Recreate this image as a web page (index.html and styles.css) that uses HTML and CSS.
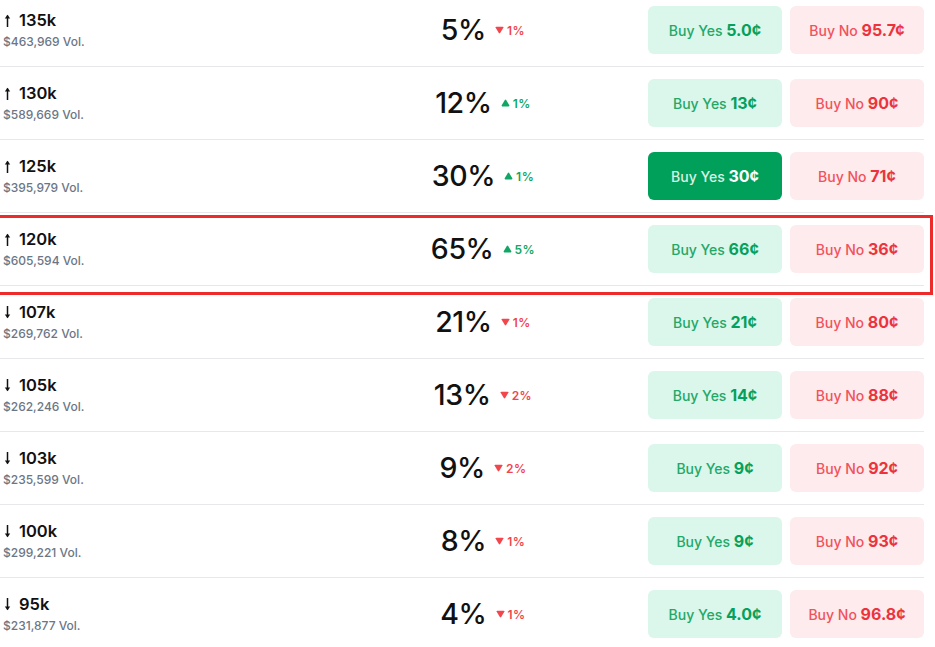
FILE: index.html
```html
<!DOCTYPE html>
<html>
<head>
<meta charset="utf-8">
<link rel="stylesheet" href="styles.css">
</head>
<body>
<div class="list">
  <div class="row">
    <div class="label"><div class="strike"><svg class="arr" viewBox="0 0 7 13"><path d="M3.5 1.5V13" /><path class="head" d="M0.8 4.6L3.5 0.8L6.2 4.6Z"/></svg>135k</div><div class="vol">$463,969 Vol.</div></div>
    <div class="prob"><span class="pct">5%</span><span class="chg down"><svg class="tri" viewBox="0 0 8 7"><path d="M0.5 1.2Q0.5 0.5 1.2 0.5H6.8Q7.5 0.5 7.5 1.2L4.6 6.2Q4 7 3.4 6.2Z"/></svg>1%</span></div>
    <div class="btns"><button class="btn yes">Buy Yes <b>5.0¢</b></button><button class="btn no">Buy No <b>95.7¢</b></button></div>
  </div>
  <div class="row">
    <div class="label"><div class="strike"><svg class="arr" viewBox="0 0 7 13"><path d="M3.5 1.5V13" /><path class="head" d="M0.8 4.6L3.5 0.8L6.2 4.6Z"/></svg>130k</div><div class="vol">$589,669 Vol.</div></div>
    <div class="prob"><span class="pct">12%</span><span class="chg up"><svg class="tri" viewBox="0 0 8 7"><path d="M0.5 5.8Q0.5 6.5 1.2 6.5H6.8Q7.5 6.5 7.5 5.8L4.6 0.8Q4 0 3.4 0.8Z"/></svg>1%</span></div>
    <div class="btns"><button class="btn yes">Buy Yes <b>13¢</b></button><button class="btn no">Buy No <b>90¢</b></button></div>
  </div>
  <div class="row">
    <div class="label"><div class="strike"><svg class="arr" viewBox="0 0 7 13"><path d="M3.5 1.5V13" /><path class="head" d="M0.8 4.6L3.5 0.8L6.2 4.6Z"/></svg>125k</div><div class="vol">$395,979 Vol.</div></div>
    <div class="prob"><span class="pct">30%</span><span class="chg up"><svg class="tri" viewBox="0 0 8 7"><path d="M0.5 5.8Q0.5 6.5 1.2 6.5H6.8Q7.5 6.5 7.5 5.8L4.6 0.8Q4 0 3.4 0.8Z"/></svg>1%</span></div>
    <div class="btns"><button class="btn yes active">Buy Yes <b>30¢</b></button><button class="btn no">Buy No <b>71¢</b></button></div>
  </div>
  <div class="row highlighted">
    <div class="label"><div class="strike"><svg class="arr" viewBox="0 0 7 13"><path d="M3.5 1.5V13" /><path class="head" d="M0.8 4.6L3.5 0.8L6.2 4.6Z"/></svg>120k</div><div class="vol">$605,594 Vol.</div></div>
    <div class="prob"><span class="pct">65%</span><span class="chg up"><svg class="tri" viewBox="0 0 8 7"><path d="M0.5 5.8Q0.5 6.5 1.2 6.5H6.8Q7.5 6.5 7.5 5.8L4.6 0.8Q4 0 3.4 0.8Z"/></svg>5%</span></div>
    <div class="btns"><button class="btn yes">Buy Yes <b>66¢</b></button><button class="btn no">Buy No <b>36¢</b></button></div>
    <div class="mark"></div>
  </div>
  <div class="row">
    <div class="label"><div class="strike"><svg class="arr" viewBox="0 0 7 13"><path d="M3.5 0V11.5" /><path class="head" d="M0.8 8.4L3.5 12.2L6.2 8.4Z"/></svg>107k</div><div class="vol">$269,762 Vol.</div></div>
    <div class="prob"><span class="pct">21%</span><span class="chg down"><svg class="tri" viewBox="0 0 8 7"><path d="M0.5 1.2Q0.5 0.5 1.2 0.5H6.8Q7.5 0.5 7.5 1.2L4.6 6.2Q4 7 3.4 6.2Z"/></svg>1%</span></div>
    <div class="btns"><button class="btn yes">Buy Yes <b>21¢</b></button><button class="btn no">Buy No <b>80¢</b></button></div>
  </div>
  <div class="row">
    <div class="label"><div class="strike"><svg class="arr" viewBox="0 0 7 13"><path d="M3.5 0V11.5" /><path class="head" d="M0.8 8.4L3.5 12.2L6.2 8.4Z"/></svg>105k</div><div class="vol">$262,246 Vol.</div></div>
    <div class="prob"><span class="pct">13%</span><span class="chg down"><svg class="tri" viewBox="0 0 8 7"><path d="M0.5 1.2Q0.5 0.5 1.2 0.5H6.8Q7.5 0.5 7.5 1.2L4.6 6.2Q4 7 3.4 6.2Z"/></svg>2%</span></div>
    <div class="btns"><button class="btn yes">Buy Yes <b>14¢</b></button><button class="btn no">Buy No <b>88¢</b></button></div>
  </div>
  <div class="row">
    <div class="label"><div class="strike"><svg class="arr" viewBox="0 0 7 13"><path d="M3.5 0V11.5" /><path class="head" d="M0.8 8.4L3.5 12.2L6.2 8.4Z"/></svg>103k</div><div class="vol">$235,599 Vol.</div></div>
    <div class="prob"><span class="pct">9%</span><span class="chg down"><svg class="tri" viewBox="0 0 8 7"><path d="M0.5 1.2Q0.5 0.5 1.2 0.5H6.8Q7.5 0.5 7.5 1.2L4.6 6.2Q4 7 3.4 6.2Z"/></svg>2%</span></div>
    <div class="btns"><button class="btn yes">Buy Yes <b>9¢</b></button><button class="btn no">Buy No <b>92¢</b></button></div>
  </div>
  <div class="row">
    <div class="label"><div class="strike"><svg class="arr" viewBox="0 0 7 13"><path d="M3.5 0V11.5" /><path class="head" d="M0.8 8.4L3.5 12.2L6.2 8.4Z"/></svg>100k</div><div class="vol">$299,221 Vol.</div></div>
    <div class="prob"><span class="pct">8%</span><span class="chg down"><svg class="tri" viewBox="0 0 8 7"><path d="M0.5 1.2Q0.5 0.5 1.2 0.5H6.8Q7.5 0.5 7.5 1.2L4.6 6.2Q4 7 3.4 6.2Z"/></svg>1%</span></div>
    <div class="btns"><button class="btn yes">Buy Yes <b>9¢</b></button><button class="btn no">Buy No <b>93¢</b></button></div>
  </div>
  <div class="row">
    <div class="label"><div class="strike"><svg class="arr" viewBox="0 0 7 13"><path d="M3.5 0V11.5" /><path class="head" d="M0.8 8.4L3.5 12.2L6.2 8.4Z"/></svg>95k</div><div class="vol">$231,877 Vol.</div></div>
    <div class="prob"><span class="pct">4%</span><span class="chg down"><svg class="tri" viewBox="0 0 8 7"><path d="M0.5 1.2Q0.5 0.5 1.2 0.5H6.8Q7.5 0.5 7.5 1.2L4.6 6.2Q4 7 3.4 6.2Z"/></svg>1%</span></div>
    <div class="btns"><button class="btn yes">Buy Yes <b>4.0¢</b></button><button class="btn no">Buy No <b>96.8¢</b></button></div>
  </div>
</div>
</body>
</html>
```
FILE: styles.css
```css
html, body {
  margin: 0;
  padding: 0;
  background: #ffffff;
  overflow: hidden;
}
body {
  font-family: Inter, "Liberation Sans", sans-serif;
  color: #111111;
}
.list {
  width: 924px;
  margin-top: -6px;
}
.row {
  position: relative;
  display: grid;
  grid-template-columns: 1fr 298px 276px;
  column-gap: 16px;
  align-items: center;
  height: 72px;
  border-bottom: 1px solid #e6e8eb;
}
.label {
  padding-left: 3px;
  display: flex;
  flex-direction: column;
  gap: 3px;
}
.strike {
  display: flex;
  align-items: center;
  font-size: 16.5px;
  font-weight: 600;
  line-height: 21px;
  color: #111111;
}
.arr {
  width: 7px;
  height: 13px;
  margin-left: 1px;
  margin-right: 8px;
}
.arr path {
  stroke: #111111;
  stroke-width: 1.5;
  fill: none;
}
.arr path.head {
  fill: #111111;
  stroke: none;
}
.vol {
  font-size: 12px;
  font-weight: 500;
  line-height: 16px;
  color: #6b7685;
}
.prob {
  display: flex;
  align-items: center;
  justify-content: center;
  gap: 9px;
}
.pct {
  font-size: 28.5px;
  font-weight: 500;
  line-height: 34px;
  color: #111111;
  letter-spacing: -0.4px;
}
.chg {
  display: flex;
  align-items: center;
  gap: 3px;
  font-size: 12px;
  font-weight: 600;
  letter-spacing: 0.5px;
}
.chg.down { color: #f2454c; }
.chg.up { color: #0fa763; }
.tri {
  width: 9px;
  height: 8px;
}
.tri path { fill: currentColor; }
.btns {
  display: flex;
  gap: 8px;
}
.btn {
  width: 134px;
  height: 48px;
  border: none;
  border-radius: 6px;
  font-family: Inter, "Liberation Sans", sans-serif;
  font-size: 14px;
  font-weight: 500;
  padding: 0;
  display: flex;
  align-items: center;
  justify-content: center;
  white-space: pre;
}
.btn b {
  font-size: 16px;
  font-weight: 700;
}
.btn.yes {
  background: #dbf6ea;
  color: #23a868;
}
.btn.yes b { color: #05a15c; }
.btn.yes.active {
  background: #00a05a;
  color: #d6f2e4;
}
.btn.yes.active b { color: #ffffff; }
.btn.no {
  background: #fdebed;
  color: #f2525c;
}
.btn.no b { color: #ec333d; }
.mark {
  position: absolute;
  left: -4px;
  top: 2px;
  width: 931px;
  height: 74px;
  border: 3px solid #ee2b2b;
  pointer-events: none;
}
```
